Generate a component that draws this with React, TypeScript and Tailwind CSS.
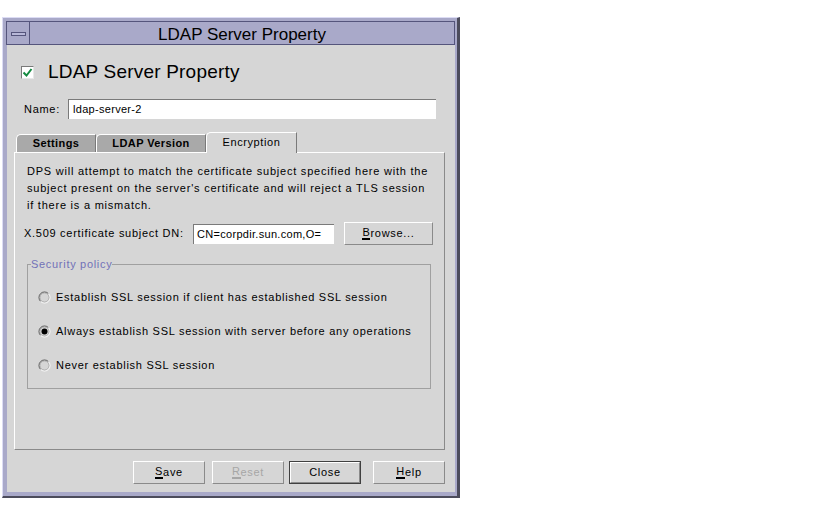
import React from "react";

const font = "font-['Liberation_Sans',Arial,sans-serif]";

function Mnemonic({ text, index }: { text: string; index: number }) {
	return (
		<>
			{text.slice(0, index)}
			<span className="border-b-[2px] border-current leading-[11px] inline-block">
				{text[index]}
			</span>
			{text.slice(index + 1)}
		</>
	);
}

function Radio({ checked }: { checked?: boolean }) {
	return (
		<svg width="13" height="13" viewBox="0 0 13 13" className="shrink-0">
			<circle cx="6.5" cy="6.5" r="5.5" fill="#d6d6d6" />
			<path d="M2.6 10.4 A5.5 5.5 0 0 1 10.4 2.6" stroke="#555555" strokeWidth="1" fill="none" />
			<path d="M10.4 2.6 A5.5 5.5 0 0 1 2.6 10.4" stroke="#ffffff" strokeWidth="1" fill="none" />
			<circle cx="6.5" cy="6.5" r="4.5" fill="none" stroke="#a8a8a8" strokeWidth="0.8" />
			{checked && <circle cx="6.5" cy="6.5" r="3" fill="#000" />}
		</svg>
	);
}

function Button({
	label,
	index,
	disabled,
	isDefault,
	className = "",
}: {
	label: string;
	index?: number;
	disabled?: boolean;
	isDefault?: boolean;
	className?: string;
}) {
	return (
		<div
			className={`h-[23px] flex items-center justify-center text-[11px] tracking-[0.7px] ${
				isDefault ? "border border-[#404040]" : ""
			} ${className}`}
		>
			<div
				className={`w-full h-full flex items-center justify-center border-t border-l border-white border-r border-b border-r-[#8a8a8a] border-b-[#8a8a8a] ${
					disabled ? "text-[#a6a6a6]" : "text-black"
				}`}
			>
				{index !== undefined ? <Mnemonic text={label} index={index} /> : label}
			</div>
		</div>
	);
}

export default function App() {
	return (
		<div className={`w-[822px] h-[515px] bg-white pt-[17px] pl-[2px] ${font}`}>
			{/* Marco de la ventana */}
			<div className="w-[458px] h-[481px] flex flex-col bg-[#a9a9c9] border-t border-l border-[#dcdcf4] border-r-[3px] border-b-[2px] border-r-[#4c4c5c] border-b-[#4c4c5c] pl-[3px] pt-[3px] pr-[2px] pb-[4px]">
				{/* Barra de título */}
				<div className="h-[24px] flex border border-[#55557c] bg-[#a9a9c9]">
					<div className="w-[23px] border-r border-[#55557c] flex items-center justify-center">
						<div className="w-[15px] h-[4px] bg-[#b8b8d8] border border-[#55557c] mt-[2px]" />
					</div>
					<div className="flex-1 flex items-center justify-center pt-[3px] text-[17px] text-black">
						LDAP Server Property
					</div>
				</div>

				{/* Contenido */}
				<div className="flex-1 bg-[#d6d6d6] flex flex-col ml-[1px]">
					<div className="h-[22px] mt-[16px] flex items-center pl-[14px]">
						<div className="w-[13px] h-[13px] bg-white border-t border-l border-[#7a7a7a] border-r border-b border-r-[#e8e8e8] border-b-[#e8e8e8] flex items-center justify-center">
							<svg width="11" height="11" viewBox="0 0 11 11">
								<path d="M1.5 5.5 L4.5 8.5 L9.5 2" stroke="#138a40" strokeWidth="2" fill="none" />
							</svg>
						</div>
						<span className="ml-[14px] text-[19px] tracking-[0.2px] text-black">
							LDAP Server Property
						</span>
					</div>

					<div className="h-[20px] mt-[16px] flex items-center pl-[17px]">
						<span className="w-[44px] text-[11px] tracking-[0.7px] text-black">Name:</span>
						<div className="w-[368px] h-[20px] bg-white border-t border-l border-[#7a7a7a] flex items-center pl-[4px] text-[11px] tracking-[0.3px] text-black">
							ldap-server-2
						</div>
					</div>

					{/* Pestañas */}
					<div className="h-[19px] mt-[14px] flex items-end pl-[9px]">
						<div className="w-[80px] h-[18px] bg-[#a9a9a9] border-t border-l border-white rounded-tl-[5px] border-r border-r-[#7a7a7a] flex items-center justify-center text-[11px] font-bold tracking-[0.4px] text-black">
							Settings
						</div>
						<div className="w-[110px] h-[18px] bg-[#a9a9a9] border-t border-l border-white rounded-tl-[5px] border-r border-r-[#7a7a7a] flex items-center justify-center text-[11px] font-bold tracking-[0.4px] text-black">
							LDAP Version
						</div>
						<div className="relative z-10 w-[91px] h-[21px] -mb-[1px] bg-[#d6d6d6] border-t border-l border-white rounded-tl-[5px] border-r border-r-[#7a7a7a] flex items-center justify-center pb-[1px] text-[11px] tracking-[0.6px] text-black">
							Encryption
						</div>
					</div>

					<div className="ml-[7px] w-[431px] h-[298px] border-t border-l border-white border-r border-b border-r-[#8a8a8a] border-b-[#8a8a8a] pl-[12px] pt-[10px] flex flex-col">
						<p className="text-[11px] leading-[17px] tracking-[0.77px] text-black whitespace-nowrap">
							DPS will attempt to match the certificate subject specified here with the
							<br />
							subject present on the server's certificate and will reject a TLS session
							<br />
							if there is a mismatch.
						</p>

						<div className="mt-[8px] h-[23px] flex items-center -ml-[3px]">
							<span className="w-[169px] text-[11px] tracking-[0.72px] text-black whitespace-nowrap">
								X.509 certificate subject DN:
							</span>
							<div className="w-[141px] h-[20px] bg-white border-t border-l border-[#7a7a7a] flex items-center pl-[3px] overflow-hidden whitespace-nowrap text-[11px] tracking-[0.3px] text-black">
								CN=corpdir.sun.com,O=
							</div>
							<Button label="Browse..." index={0} className="ml-[10px] w-[89px]" />
						</div>

						<fieldset className="mt-[11px] w-[404px] h-[133px] border border-[#a0a0a0] pl-[10px] pr-0 pb-0 pt-0">
							<legend className="-ml-[7px] px-0 text-[11px] tracking-[0.7px] text-[#7272b8]">
								Security policy
							</legend>
							<div className="flex flex-col gap-[21px] mt-[18px] text-[11px] tracking-[0.72px] text-black whitespace-nowrap">
								<div className="flex items-center h-[13px] gap-[5px]">
									<Radio />
									Establish SSL session if client has established SSL session
								</div>
								<div className="flex items-center h-[13px] gap-[5px]">
									<Radio checked />
									Always establish SSL session with server before any operations
								</div>
								<div className="flex items-center h-[13px] gap-[5px]">
									<Radio />
									Never establish SSL session
								</div>
							</div>
						</fieldset>
					</div>

					{/* Botones */}
					<div className="mt-[11px] flex pl-[126px]">
						<Button label="Save" index={0} className="w-[72px]" />
						<Button label="Reset" index={0} disabled className="ml-[7px] w-[72px]" />
						<Button label="Close" isDefault className="ml-[5px] w-[72px]" />
						<Button label="Help" index={0} className="ml-[12px] w-[72px]" />
					</div>
				</div>
			</div>
		</div>
	);
}
